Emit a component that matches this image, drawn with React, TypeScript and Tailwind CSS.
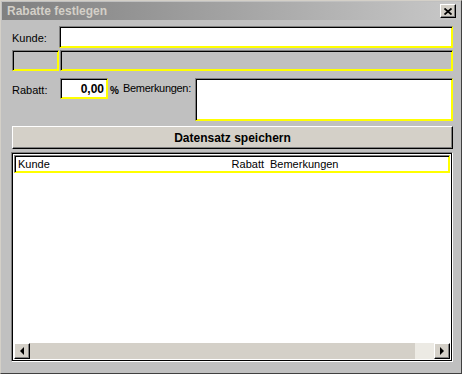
import React from "react";

const sunken =
  "border border-t-[#808080] border-l-[#808080] border-r-[#ffff00] border-b-[#ffff00] shadow-[inset_1px_1px_0_#000,inset_-1px_-1px_0_#ffff00]";
const raised =
  "border border-t-white border-l-white border-r-[#000] border-b-[#000] shadow-[inset_-1px_-1px_0_#808080]";

function ScrollBtn({ dir }: { dir: "left" | "right" }) {
  return (
    <div className={`w-[16px] h-full bg-[#d4d0c8] flex items-center justify-center ${raised}`}>
      <svg width="6" height="8" viewBox="0 0 6 8">
        {dir === "left" ? <polygon points="5,0 5,8 1,4" fill="#000" /> : <polygon points="1,0 1,8 5,4" fill="#000" />}
      </svg>
    </div>
  );
}

export default function App() {
  return (
    <div
      className="w-[462px] h-[374px] bg-[#c0c0c0] flex flex-col text-[11px] text-black border border-t-[#d4d0c8] border-l-[#d4d0c8] border-r-[#404040] border-b-[#404040] overflow-hidden"
      style={{ fontFamily: '"Liberation Sans", Arial, sans-serif' }}
    >
      {/* title bar */}
      <div className="mx-[1px] mt-[1px] h-[18px] bg-linear-to-r from-[#808080] to-[#c8c8c8] flex items-center pl-[5px] pr-[4px]">
        <span className="font-bold text-[12px] text-[#d4d0c8] flex-1">Rabatte festlegen</span>
        <div className={`w-[16px] h-[14px] bg-[#d4d0c8] flex items-center justify-center ${raised}`}>
          <svg width="8" height="7" viewBox="0 0 8 7">
            <path d="M0.5 0.5 L7.5 6.5 M7.5 0.5 L0.5 6.5" stroke="#000" strokeWidth="1.8" />
          </svg>
        </div>
      </div>

      <div className="flex flex-col pl-[10px] pr-[8px]">
        {/* Kunde */}
        <div className="mt-[6px] flex h-[22px]">
          <div className="w-[48px] pt-[4px] pl-[1px]">Kunde:</div>
          <div className={`flex-1 bg-white ${sunken}`} />
        </div>

        {/* second row */}
        <div className="mt-[2px] flex h-[21px] gap-[1px]">
          <div className={`w-[47px] ml-[1px] bg-[#c0c0c0] ${sunken}`} />
          <div className={`flex-1 bg-[#c0c0c0] ${sunken}`} />
        </div>

        {/* Rabatt + Bemerkungen */}
        <div className="mt-[7px] flex h-[43px]">
          <div className="w-[49px] pt-[4px] pl-[1px]">Rabatt:</div>
          <div className={`w-[48px] h-[21px] bg-white flex items-center justify-end pr-[3px] font-bold text-[12px] ${sunken}`}>
            0,00
          </div>
          <div className="w-[15px] pt-[5px] pl-[2px] font-bold text-[10px]">%</div>
          <div className="w-[72px] pt-[2px] tracking-[-0.3px]">Bemerkungen:</div>
          <div className={`flex-1 bg-white ${sunken}`} />
        </div>

        {/* save button */}
        <div
          className={`mt-[5px] h-[23px] ml-[1px] bg-[#d4d0c8] flex items-center justify-center font-bold text-[12px] ${raised}`}
        >
          Datensatz speichern
        </div>

        {/* list */}
        <div className="mt-[3px] h-[210px] flex flex-col border border-t-[#808080] border-l-[#808080] border-r-white border-b-white shadow-[inset_1px_1px_0_#000,inset_-1px_-1px_0_#000] p-[2px] bg-white">
          <div className={`h-[18px] flex items-center bg-white ${sunken}`}>
            <span className="w-[213px] pl-[3px]">Kunde</span>
            <span className="w-[36px] text-right">Rabatt</span>
            <span className="pl-[6px]">Bemerkungen</span>
          </div>
          <div className="flex-1 bg-white" />
          <div className="h-[16px] flex bg-[#d4d0c8]">
            <ScrollBtn dir="left" />
            <div className="flex-1 bg-[#d4d0c8]" />
            <div className="w-[19px] bg-[#eceae4]" />
            <ScrollBtn dir="right" />
          </div>
        </div>
      </div>
    </div>
  );
}
